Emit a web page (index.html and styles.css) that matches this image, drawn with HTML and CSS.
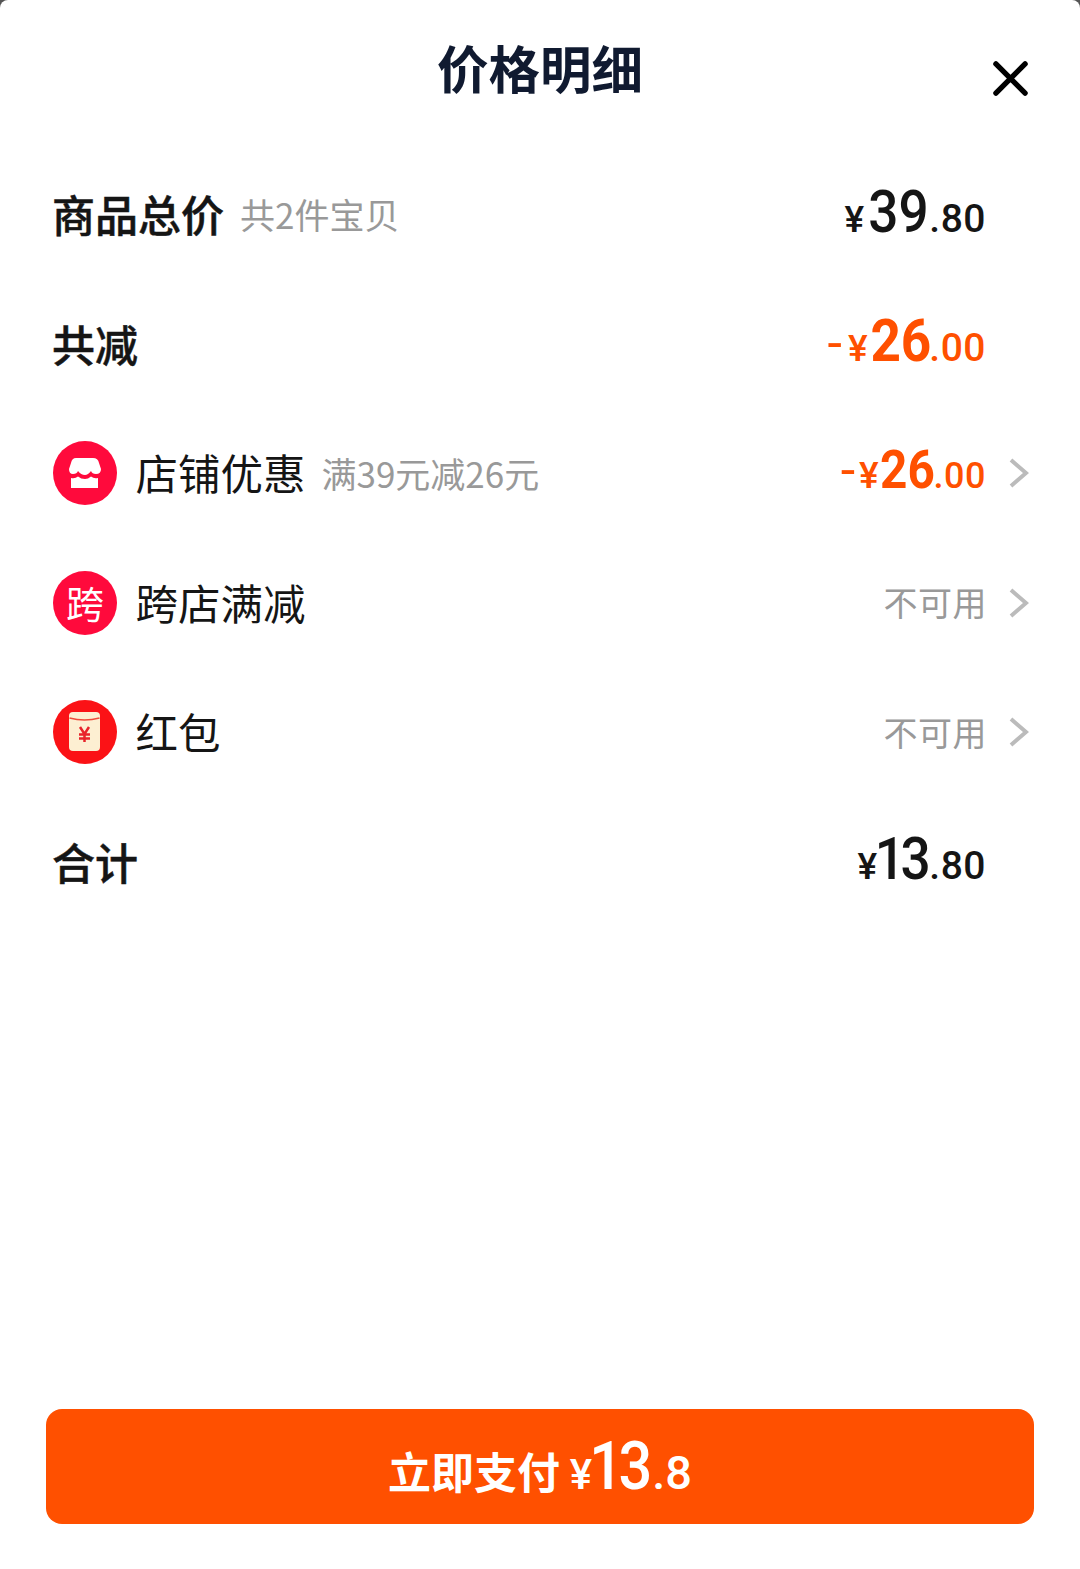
FILE: index.html
```html
<!DOCTYPE html>
<html>
  <head>
    <title>价格明细</title>
    <meta charset="utf-8" />
    <link rel="stylesheet" href="styles.css">
  </head>
  <body>
    <div class="sheet">
      <header class="sheet-header">
        <h1>价格明细</h1>
        <svg class="close" viewBox="0 0 36 36" width="35" height="35">
          <path d="M3 3 L33 33 M33 3 L3 33" fill="none" stroke="#000" stroke-width="5.500" stroke-linecap="round" />
        </svg>
      </header>

      <main class="rows">
        <div class="row">
          <span class="label bold">商品总价</span>
          <span class="note">共2件宝贝</span>
          <span class="price"><i class="yen">¥</i><b class="digits">39</b><i class="cents">.80</i></span>
        </div>
        <div class="row">
          <span class="label bold">共减</span>
          <span class="price orange"><i class="minus">-</i><i class="yen">¥</i><b class="digits">26</b><i class="cents">.00</i></span>
        </div>
        <div class="row">
          <svg class="badge" viewBox="0 0 64 64" width="64" height="64">
            <circle cx="32" cy="32" r="32" fill="#ff0a3c" />
            <path d="M23 17 H40 Q45 17 46 22 L48 28 Q48 33 43 33 Q39 33 38 30 Q35 34 32 34 Q28 34 25 30 Q24 33 20 33 Q16 33 16 28 L18 22 Q19 17 23 17 Z" fill="#fff" />
            <path d="M18 37 Q22 38 25 35.500 Q28 38 32 38 Q35 38 38 35.500 Q41 38 45 37 V47 H18 Z" fill="#fff" />
          </svg>
          <span class="label">店铺优惠</span>
          <span class="note">满39元减26元</span>
          <span class="price small orange"><i class="minus">-</i><i class="yen">¥</i><b class="digits">26</b><i class="cents">.00</i></span>
          <svg class="arrow" viewBox="0 0 20 30" width="20" height="30"><path d="M2 2 L17 15 L2 28" /></svg>
        </div>
        <div class="row">
          <span class="badge badge-text">跨</span>
          <span class="label">跨店满减</span>
          <span class="off">不可用</span>
          <svg class="arrow" viewBox="0 0 20 30" width="20" height="30"><path d="M2 2 L17 15 L2 28" /></svg>
        </div>
        <div class="row">
          <svg class="badge" viewBox="0 0 64 64" width="64" height="64">
            <circle cx="32" cy="32" r="32" fill="#fb1216" />
            <rect x="16" y="12" width="31" height="39" rx="4" fill="#fdefd2" />
            <path d="M16.500 18 Q31.500 22 46.500 18" fill="none" stroke="#f0493a" stroke-width="1.500" />
            <path d="M27 27 L31.500 34 L36 27 M31.500 34 V42 M26 34.500 H37 M26 38.500 H37" fill="none" stroke="#e8232a" stroke-width="2.500" />
          </svg>
          <span class="label">红包</span>
          <span class="off">不可用</span>
          <svg class="arrow" viewBox="0 0 20 30" width="20" height="30"><path d="M2 2 L17 15 L2 28" /></svg>
        </div>
        <div class="row">
          <span class="label bold">合计</span>
          <span class="price"><i class="yen">¥</i><b class="digits ones">13</b><i class="cents">.80</i></span>
        </div>
      </main>

      <footer class="pay-wrap">
        <button class="pay">立即支付 <i class="yen">¥</i><b class="digits ones">13</b><i class="cents">.8</i></button>
      </footer>
    </div>
  </body>
</html>
```

FILE: styles.css
```css
* {
  box-sizing: border-box;
}

html, body {
  margin: 0;
  padding: 0;
  background: #555;
}

body {
  font-family: "Noto Sans CJK SC", "Noto Sans", sans-serif;
  color: #111;
}

.sheet {
  width: 1080px;
  height: 1569px;
  background: #fff;
  border-radius: 8px 8px 0 0;
  display: flex;
  flex-direction: column;
}

.sheet-header {
  position: relative;
  height: 149.500px;
  text-align: center;
}

.sheet-header h1 {
  margin: 0;
  padding-top: 33px;
  font-size: 51.500px;
  line-height: 68px;
  font-weight: 700;
  color: #101a30;
}

.close {
  position: absolute;
  left: 993px;
  top: 61px;
}

.rows {
  flex: 1;
  padding: 0 51px 0 53px;
}

.row {
  display: flex;
  align-items: center;
  height: 129.5px;
}

.label {
  padding-bottom: 2px;
  font-size: 42.500px;
  line-height: 60px;
  color: #151515;
}

.bold {
  margin-left: -1px;
  font-size: 43px;
  font-weight: 500;
  -webkit-text-stroke: 0.500px #151515;
}

.note {
  margin-left: 16px;
  padding-bottom: 2px;
  font-size: 35px;
  color: #999;
}

.badge {
  flex: none;
  width: 64px;
  height: 64px;
  margin-right: 18.500px;
}

.badge-text {
  border-radius: 50%;
  background: #ff0a3c;
  color: #fff;
  font-size: 38px;
  line-height: 62px;
  text-align: center;
}

.price {
  margin-left: auto;
  margin-right: 43px;
  padding-bottom: 6px;
  font-family: Roboto, sans-serif;
  font-weight: 500;
  white-space: nowrap;
  color: #151515;
}

.price i {
  font-style: normal;
}

.digits {
  display: inline-block;
  margin: 0 -3px;
  font-size: 59px;
  font-weight: 500;
  transform: scaleX(0.9);
}

.ones {
  margin: 0 0 0 -9px;
  letter-spacing: -5px;
}

.price .yen {
  margin-right: 4px;
  font-size: 37px;
}

.price .minus {
  margin-right: 6px;
  font-size: 52px;
  font-weight: 400;
  line-height: 1;
}

.price .cents {
  font-size: 39px;
  letter-spacing: 0.500px;
}

.price.orange .yen {
  margin-right: 2px;
}

.price.orange .cents {
  margin-left: -2px;
}

.price.small {
  margin-right: 23px;
}

.price.small .digits {
  font-size: 53px;
  font-weight: 700;
}

.price.orange .digits {
  font-weight: 700;
}

.price.small .yen {
  margin-right: 1px;
}

.price.small .minus {
  margin-right: 4px;
}

.price.small .cents {
  margin-left: -1px;
  font-size: 36px;
}

.orange {
  color: #ff5000;
}

.off {
  margin-left: auto;
  margin-right: 22px;
  padding-bottom: 2px;
  font-size: 34px;
  letter-spacing: 0.500px;
  color: #999;
}

.arrow {
  flex: none;
}

.arrow path {
  fill: none;
  stroke: #bbb;
  stroke-width: 4;
}

.pay-wrap {
  padding: 0 46px 45px 46px;
}

.pay {
  width: 988px;
  height: 115px;
  border: 0;
  border-radius: 16px;
  background: #ff5000;
  color: #fff;
  font-family: "Noto Sans CJK SC", sans-serif;
  font-size: 43px;
  font-weight: 700;
  white-space: nowrap;
}

.pay i {
  font-style: normal;
  font-family: Roboto, sans-serif;
  font-weight: 500;
}

.pay .yen {
  margin-right: 3px;
  font-size: 42px;
}

.pay .digits {
  margin: 0 -3px 0 -9px;
  font-family: Roboto, sans-serif;
  font-size: 66px;
}

.pay .cents {
  margin-left: 4px;
  font-size: 47px;
}
```
